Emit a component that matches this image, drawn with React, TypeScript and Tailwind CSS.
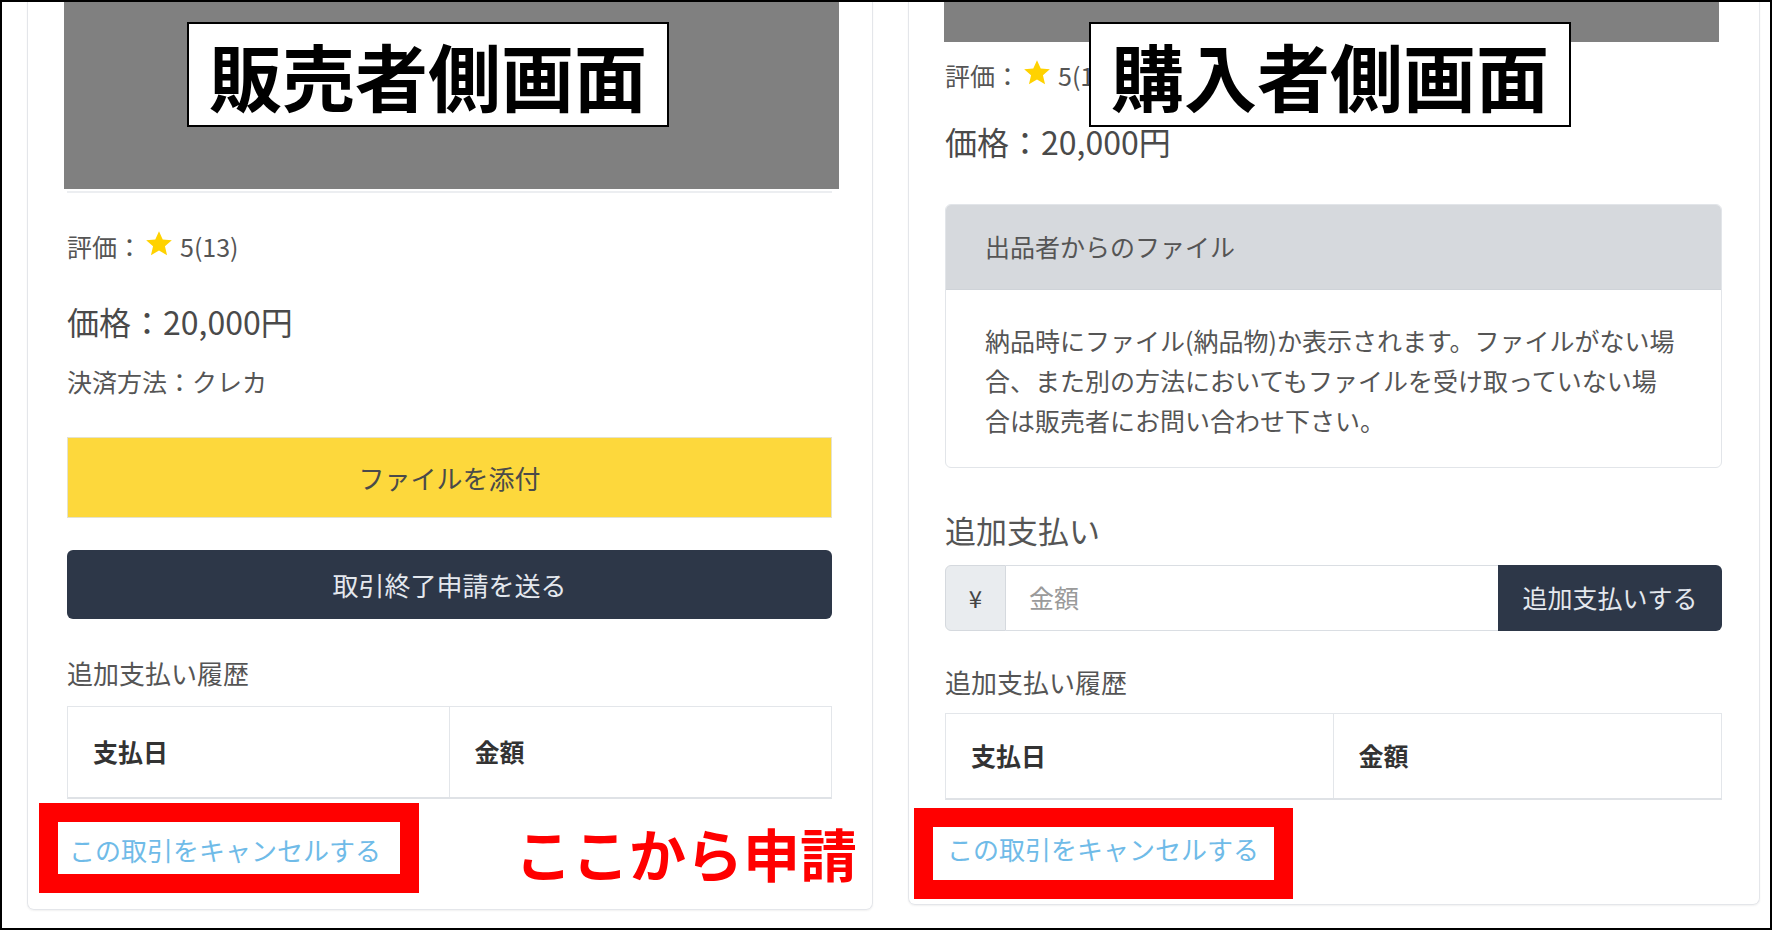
import React from "react";

const font = { fontFamily: '"Noto Sans CJK JP", "Noto Sans", sans-serif' };

function Star() {
  return (
    <svg viewBox="0 0 24 24" className="w-[28px] h-[28px] inline-block mx-[3px] -mt-[4px]">
      <path
        fill="#ffd200"
        d="M12 1l3.2 7.2 7.8.6-5.9 5.1 1.8 7.7L12 17.6l-6.9 4 1.8-7.7L1 8.8l7.8-.6z"
      />
    </svg>
  );
}

function Label({ text, className }: { text: string; className: string }) {
  return (
    <div
      className={`absolute top-[20px] w-[482px] h-[105px] border-2 border-black bg-white flex items-center justify-center ${className}`}
    >
      <span className="text-[73px] leading-none font-bold text-black">{text}</span>
    </div>
  );
}

function RedBox({ className }: { className: string }) {
  return <div className={`absolute border-[19px] border-[#ff0000] ${className}`} />;
}

function HistoryTable({ h }: { h: string }) {
  return (
    <div className={`grid grid-cols-2 border border-[#e3e6ea] border-b-2 border-b-[#dfe2e6] ${h}`}>
      <div className="border-r border-[#e3e6ea] flex items-center pl-[25px] text-[25px] font-bold text-[#333]">
        支払日
      </div>
      <div className="flex items-center pl-[25px] text-[25px] font-bold text-[#333]">金額</div>
    </div>
  );
}

function CancelLink({ mt }: { mt: string }) {
  return (
    <div className={`${mt} text-[26px] leading-[36px] text-[#6fbbe8] pl-[2px]`}>この取引をキャンセルする</div>
  );
}

function SellerCard() {
  return (
    <div className="relative w-[846px] h-[908px] border-x border-b border-[#e4e6ea] rounded-b-[7px] shadow-[0_1px_2px_rgba(0,0,0,0.06)] pl-[39px] pr-[40px] flex flex-col text-[#555]">
      <div className="-ml-[3px] w-[775px] h-[187px] bg-[#808080]" />
      <div className="mt-[2px] h-[2px] w-[765px] bg-[#eceef1]" />
      <div className="mt-[35px] text-[25px] leading-[36px] flex items-center">
        評価：<Star />
        <span className="ml-[4px]">5(13)</span>
      </div>
      <div className="mt-[35px] text-[32px] leading-[44px] text-[#4a4a4a]">価格：20,000円</div>
      <div className="mt-[20px] text-[25px] leading-[36px]">決済方法：クレカ</div>
      <div className="mt-[38px] h-[81px] bg-[#fdd83c] border border-[#e4e2cf] flex items-center justify-center text-[26px] text-[#4a4a4a]">
        ファイルを添付
      </div>
      <div className="mt-[32px] h-[69px] bg-[#2d3748] rounded-[6px] flex items-center justify-center text-[26px] text-[#e4e8ee]">
        取引終了申請を送る
      </div>
      <div className="mt-[36px] text-[26px] leading-[36px]">追加支払い履歴</div>
      <div className="mt-[15px]">
        <HistoryTable h="h-[93px]" />
      </div>
      <CancelLink mt="mt-[33px]" />

      <Label text="販売者側画面" className="left-[159px]" />
      <RedBox className="left-[11px] top-[801px] w-[380px] h-[90px]" />
      <div className="absolute left-[487px] top-[818px] text-[57px] leading-[64px] font-bold text-[#ff0000]">
        ここから申請
      </div>
    </div>
  );
}

function BuyerCard() {
  return (
    <div className="relative w-[852px] h-[903px] border-x border-b border-[#e4e6ea] rounded-b-[7px] shadow-[0_1px_2px_rgba(0,0,0,0.06)] pl-[36px] pr-[37px] flex flex-col text-[#555]">
      <div className="-ml-[1px] w-[775px] h-[40px] bg-[#808080]" />
      <div className="mt-[15px] text-[25px] leading-[36px] flex items-center">
        評価：<Star />
        <span className="ml-[4px]">5(13)</span>
      </div>
      <div className="mt-[26px] text-[32px] leading-[44px] text-[#4a4a4a]">価格：20,000円</div>
      <div className="mt-[41px] border border-[#e2e5e9] rounded-[6px] overflow-hidden">
        <div className="h-[85px] bg-[#d6d9dd] border-b border-[#cfd3d8] flex items-center pl-[39px] text-[25px]">
          出品者からのファイル
        </div>
        <div className="pl-[39px] pr-[30px] pt-[30px] pb-[27px] text-[25px] leading-[40px] whitespace-nowrap">
          納品時にファイル(納品物)か表示されます。ファイルがない場
          <br />
          合、また別の方法においてもファイルを受け取っていない場
          <br />
          合は販売者にお問い合わせ下さい。
        </div>
      </div>
      <div className="mt-[40px] text-[31px] leading-[44px]">追加支払い</div>
      <div className="mt-[13px] h-[66px] flex">
        <div className="w-[61px] bg-[#e9ecef] border border-[#d5d9de] rounded-l-[6px] flex items-center justify-center text-[24px] text-[#444]">
          ¥
        </div>
        <div className="flex-1 border-y border-[#dadee3] flex items-center pl-[23px] text-[25px] text-[#9a9a9a]">
          金額
        </div>
        <div className="w-[224px] bg-[#2d3748] rounded-r-[6px] flex items-center justify-center text-[25px] text-[#e4e8ee]">
          追加支払いする
        </div>
      </div>
      <div className="mt-[33px] text-[26px] leading-[36px]">追加支払い履歴</div>
      <div className="mt-[13px]">
        <HistoryTable h="h-[87px]" />
      </div>
      <CancelLink mt="mt-[31px]" />

      <Label text="購入者側画面" className="left-[180px]" />
      <RedBox className="left-[5px] top-[806px] w-[379px] h-[91px]" />
    </div>
  );
}

export default function App() {
  return (
    <div style={font} className="w-[1772px] h-[930px] bg-white border-2 border-black overflow-hidden">
      <div className="flex gap-[35px] pl-[25px] items-start">
        <SellerCard />
        <BuyerCard />
      </div>
    </div>
  );
}
